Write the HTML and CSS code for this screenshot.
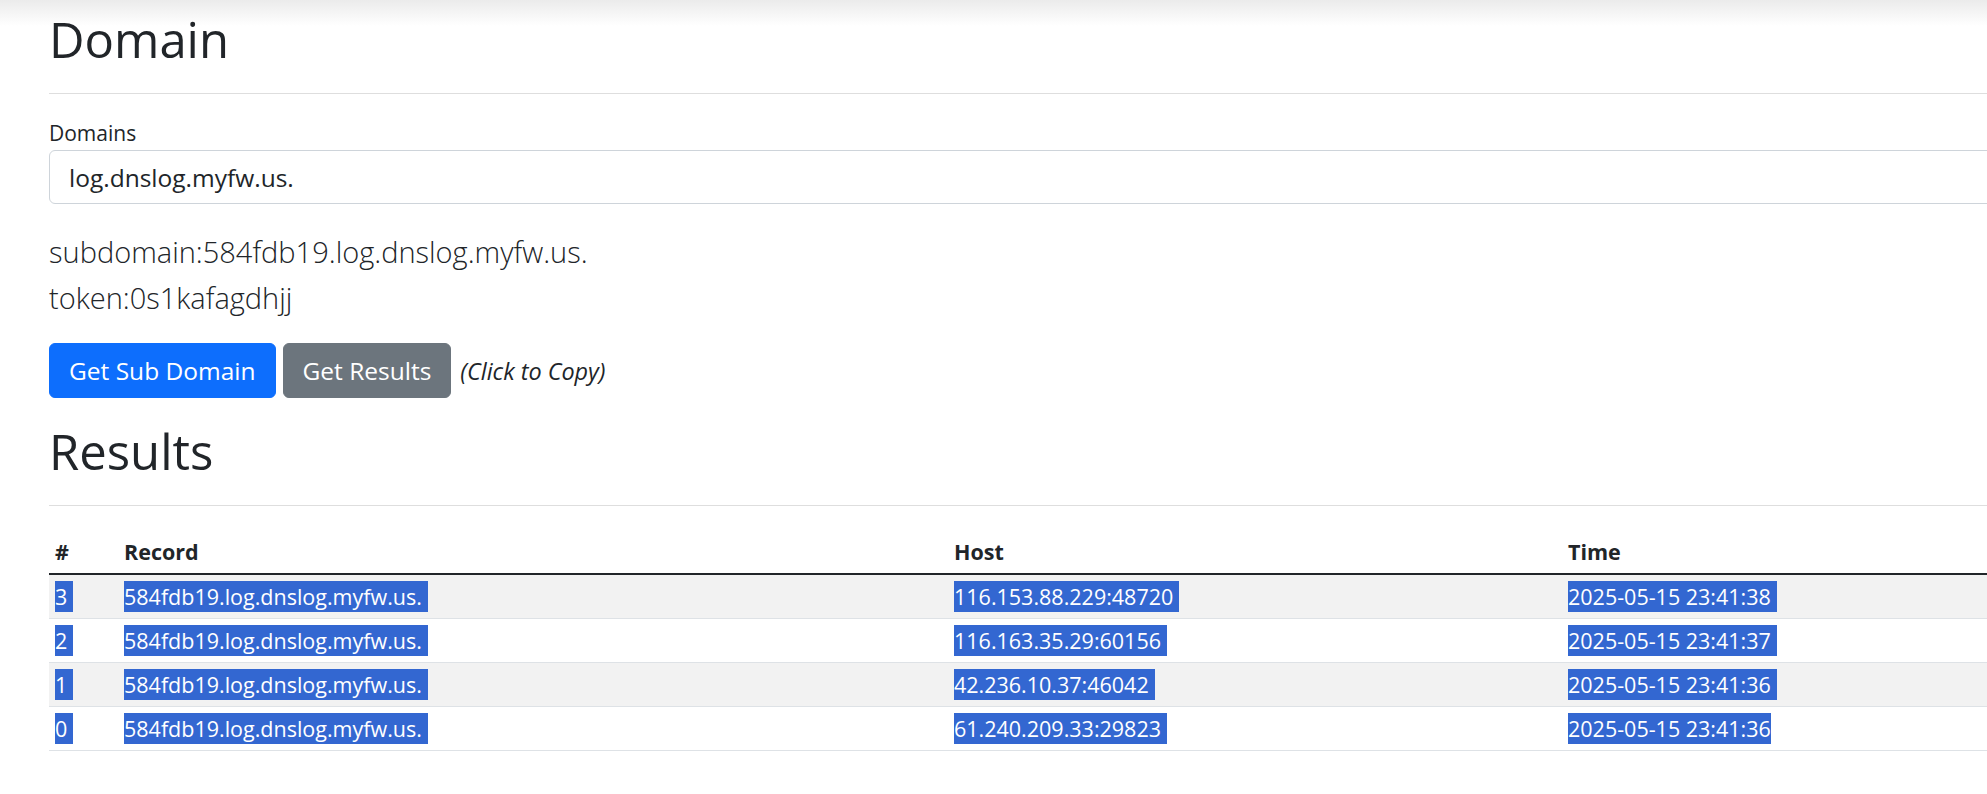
FILE: index.html
```html
<!DOCTYPE html>
<html lang="en">
<head>
    <meta charset="UTF-8">
    <meta name="viewport" content="width=device-width, initial-scale=1.0">
    <title>DNSLog</title>
    <link rel="stylesheet" href="styles.css">
</head>
<body>
    <div class="container">
        <h1>Domain</h1>
        <hr>

        <label class="form-label" for="domainInput">Domains</label>
        <input type="text" id="domainInput" class="form-control" value="log.dnslog.myfw.us.">

        <p class="lead" id="subInfo">subdomain:584fdb19.log.dnslog.myfw.us.<br>token:0s1kafagdhjj</p>

        <div class="actions">
            <button class="btn btn-primary">Get Sub Domain</button>
            <button class="btn btn-secondary">Get Results</button>
            <em class="copy-hint">(Click to Copy)</em>
        </div>

        <h1 class="results-title">Results</h1>
        <hr>

        <table class="table">
            <colgroup>
                <col class="col-id">
                <col class="col-record">
                <col class="col-host">
                <col>
            </colgroup>
            <thead>
                <tr><th>#</th><th>Record</th><th>Host</th><th>Time</th></tr>
            </thead>
            <tbody id="results">
                <tr><td><span class="sel">3</span></td><td><span class="sel">584fdb19.log.dnslog.myfw.us.</span></td><td><span class="sel">116.153.88.229:48720</span></td><td><span class="sel">2025-05-15 23:41:38</span></td></tr>
                <tr><td><span class="sel">2</span></td><td><span class="sel">584fdb19.log.dnslog.myfw.us.</span></td><td><span class="sel">116.163.35.29:60156</span></td><td><span class="sel">2025-05-15 23:41:37</span></td></tr>
                <tr><td><span class="sel">1</span></td><td><span class="sel">584fdb19.log.dnslog.myfw.us.</span></td><td><span class="sel">42.236.10.37:46042</span></td><td><span class="sel">2025-05-15 23:41:36</span></td></tr>
                <tr><td><span class="sel">0</span></td><td><span class="sel">584fdb19.log.dnslog.myfw.us.</span></td><td><span class="sel">61.240.209.33:29823</span></td><td><span class="sel last">2025-05-15 23:41:36</span></td></tr>
            </tbody>
        </table>
    </div>
</body>
</html>
```

FILE: styles.css
```css
body {
    margin: 0;
    font-family: "Open Sans", "Noto Sans", sans-serif;
    color: #212529;
    background: #fff linear-gradient(to bottom, #ebebeb 0, #fff 26px) no-repeat;
    overflow: hidden;
}

.container {
    width: 2600px;
    padding: 9px 0 0 49px;
}

h1 {
    font-size: 49px;
    font-weight: 400;
    line-height: 60px;
    margin: 0;
}

hr {
    border: 0;
    border-top: 1px solid #dedede;
    margin: 24px 0;
}

.form-label {
    display: block;
    font-size: 21px;
    line-height: 30px;
    margin-bottom: 2px;
}

.form-control {
    display: block;
    box-sizing: border-box;
    width: 100%;
    height: 54px;
    padding: 0 19px;
    font-family: inherit;
    font-size: 24.5px;
    color: #212529;
    border: 1px solid #ced4da;
    border-radius: 6px;
    outline: none;
}

.lead {
    margin: 25px 0 0;
    font-size: 29px;
    font-weight: 300;
    line-height: 45.6px;
}

.actions {
    display: flex;
    align-items: center;
    gap: 7px;
    margin-top: 23px;
}

.btn {
    font-family: inherit;
    font-size: 24.5px;
    line-height: 37px;
    padding: 8px 19px;
    color: #fff;
    border: 1px solid transparent;
    border-radius: 6px;
    cursor: pointer;
}

.btn-primary {
    background-color: #0d6efd;
    border-color: #0d6efd;
}

.btn-secondary {
    background-color: #6c757d;
    border-color: #6c757d;
}

.copy-hint {
    font-size: 23.4px;
    padding-left: 2px;
}

.results-title {
    margin-top: 23px;
}

.table {
    width: 100%;
    margin-top: 23px;
    border-collapse: separate;
    border-spacing: 0;
    table-layout: fixed;
    font-size: 21.5px;
}

.col-id {
    width: 69px;
}

.col-record {
    width: 830px;
}

.col-host {
    width: 614px;
}

.table th,
.table td {
    padding: 6px;
    line-height: 31px;
    text-align: left;
    white-space: nowrap;
}

.table th {
    font-weight: 700;
    border-bottom: 2px solid #212529;
}

.table td {
    border-bottom: 1px solid #dee2e6;
}

.table tbody tr:nth-child(odd) td {
    background-color: #f2f2f2;
}

.sel {
    display: inline-block;
    vertical-align: top;
    padding-right: 6px;
    background-color: #3367d1;
    color: #fff;
}

.sel.last {
    padding-right: 0;
}
```
